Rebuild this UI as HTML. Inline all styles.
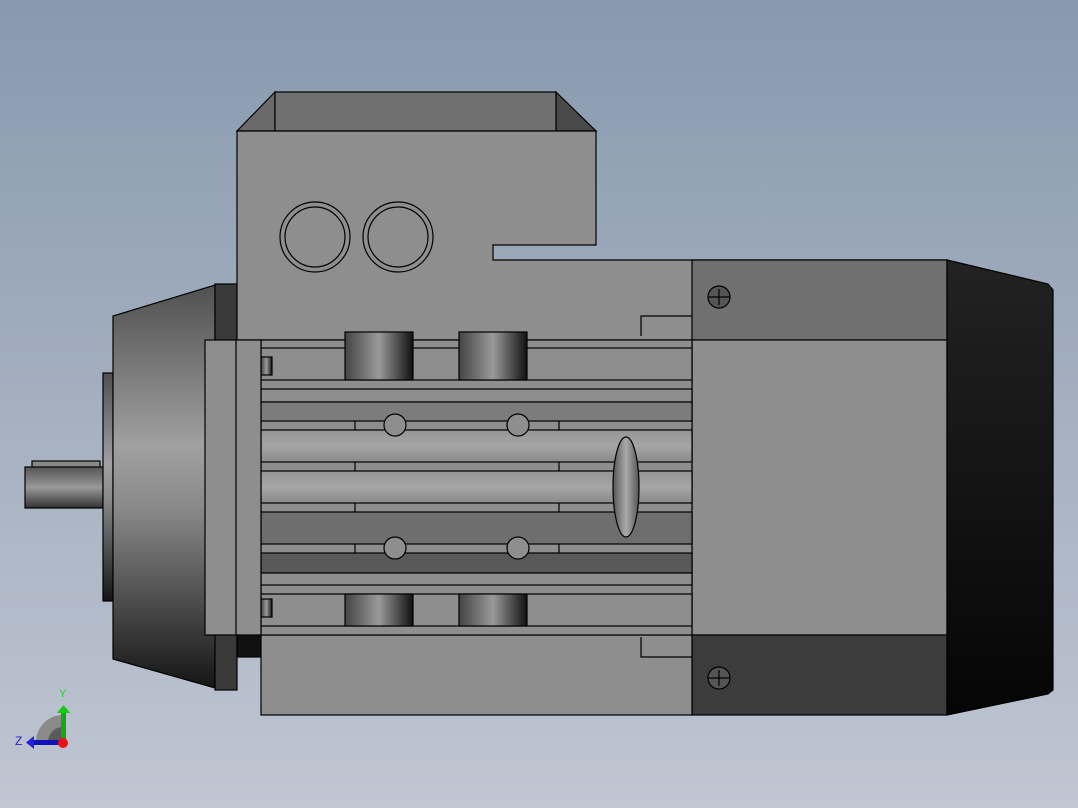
<!DOCTYPE html>
<html><head><style>html,body{margin:0;padding:0;width:1078px;height:808px;overflow:hidden}</style></head>
<body>
<svg width="1078" height="808" viewBox="0 0 1078 808" xmlns="http://www.w3.org/2000/svg" font-family="Liberation Sans, sans-serif">
<defs>
<linearGradient id="bg" x1="0" y1="0" x2="0" y2="1"><stop offset="0" stop-color="#8899ae"/><stop offset="1" stop-color="#c0c6d2"/></linearGradient>
<linearGradient id="cone" x1="0" y1="0" x2="0" y2="1"><stop offset="0" stop-color="#505050"/><stop offset="0.4" stop-color="#a0a0a0"/><stop offset="0.55" stop-color="#8a8a8a"/><stop offset="1" stop-color="#151515"/></linearGradient>
<linearGradient id="shaft" x1="0" y1="0" x2="0" y2="1"><stop offset="0" stop-color="#555"/><stop offset="0.5" stop-color="#999"/><stop offset="1" stop-color="#333"/></linearGradient>
<linearGradient id="boss" x1="0" y1="0" x2="1" y2="0"><stop offset="0" stop-color="#444"/><stop offset="0.5" stop-color="#9a9a9a"/><stop offset="1" stop-color="#111"/></linearGradient>
<linearGradient id="fan" x1="0" y1="0" x2="0" y2="1"><stop offset="0" stop-color="#222"/><stop offset="1" stop-color="#050505"/></linearGradient>
<linearGradient id="finL" x1="0" y1="0" x2="0" y2="1"><stop offset="0" stop-color="#959595"/><stop offset="0.5" stop-color="#a6a6a6"/><stop offset="1" stop-color="#8a8a8a"/></linearGradient>
<linearGradient id="ell" x1="0" y1="0" x2="1" y2="0"><stop offset="0" stop-color="#555"/><stop offset="0.5" stop-color="#aaa"/><stop offset="1" stop-color="#555"/></linearGradient>
</defs>
<rect width="1078" height="808" fill="url(#bg)"/>
<g stroke="#000" stroke-width="1.2">
<!-- shaft -->
<rect x="32" y="461" width="68" height="7" fill="#888"/>
<rect x="25" y="467" width="78" height="41" fill="url(#shaft)"/>
<!-- spigot -->
<rect x="103" y="373" width="10" height="228" fill="url(#cone)"/>
<!-- cone -->
<polygon points="113,316 215,285 215,688 113,659" fill="url(#cone)"/>
<rect x="215" y="284" width="22" height="406" fill="#3a3a3a"/>
<rect x="237" y="635" width="24" height="22" fill="#111"/>
<!-- junction box top -->
<polygon points="237,131 275,92 275,131" fill="#6a6a6a"/>
<polygon points="556,92 596,131 556,131" fill="#4a4a4a"/>
<rect x="275" y="92" width="281" height="39" fill="#707070"/>
<!-- body with box -->
<polygon points="237,131 596,131 596,245 493,245 493,260 947,260 947,340 237,340" fill="#8e8e8e"/>
<rect x="692" y="260" width="255" height="80" fill="#707070"/>
<rect x="692" y="340" width="255" height="295" fill="#8e8e8e"/>
<rect x="692" y="635" width="255" height="80" fill="#3c3c3c"/>
<rect x="261" y="635" width="431" height="80" fill="#8e8e8e"/>
<rect x="261" y="340" width="431" height="295" fill="#8e8e8e"/>
<!-- brackets -->
<path d="M641,336 V316 H692" fill="none"/>
<path d="M641,637 V657 H692" fill="none"/>
<!-- fins -->
<rect x="261" y="348" width="431" height="32" fill="#8e8e8e"/>
<rect x="261" y="389" width="431" height="13" fill="#8e8e8e"/>
<rect x="261" y="402" width="431" height="19" fill="#7c7c7c"/>
<rect x="261" y="430" width="431" height="32" fill="url(#finL)"/>
<rect x="261" y="471" width="431" height="32" fill="url(#finL)"/>
<rect x="261" y="512" width="431" height="32" fill="#6e6e6e"/>
<rect x="261" y="553" width="431" height="20" fill="#595959"/>
<rect x="261" y="573" width="431" height="12" fill="#8e8e8e"/>
<rect x="261" y="594" width="431" height="32" fill="#8e8e8e"/>
<path d="M355,421V430M559,421V430M355,462V471M559,462V471M355,503V512M559,503V512M355,544V553M559,544V553" fill="none"/>
<circle cx="395" cy="425" r="11" fill="#8e8e8e"/>
<circle cx="518" cy="425" r="11" fill="#8e8e8e"/>
<circle cx="395" cy="548" r="11" fill="#8e8e8e"/>
<circle cx="518" cy="548" r="11" fill="#8e8e8e"/>
<ellipse cx="626" cy="487" rx="13" ry="50" fill="url(#ell)"/>
<!-- bosses -->
<rect x="345" y="332" width="68" height="48" fill="url(#boss)"/>
<rect x="459" y="332" width="68" height="48" fill="url(#boss)"/>
<rect x="345" y="594" width="68" height="32" fill="url(#boss)"/>
<rect x="459" y="594" width="68" height="32" fill="url(#boss)"/>
<rect x="261" y="357" width="11" height="18" fill="url(#boss)"/>
<rect x="261" y="599" width="11" height="18" fill="url(#boss)"/>
<!-- flange plate -->
<rect x="205" y="340" width="56" height="295" fill="#8e8e8e"/>
<line x1="236" y1="340" x2="236" y2="635"/>
<!-- glands -->
<circle cx="315" cy="237" r="35" fill="none"/>
<circle cx="315" cy="237" r="30" fill="none"/>
<circle cx="398" cy="237" r="35" fill="none"/>
<circle cx="398" cy="237" r="30" fill="none"/>
<!-- screws -->
<circle cx="719" cy="297" r="11" fill="#555"/>
<path d="M708,297H730M719,289V305" fill="none"/>
<circle cx="719" cy="678" r="11" fill="#555"/>
<path d="M708,678H730M719,670V686" fill="none"/>
<!-- fan cover -->
<polygon points="947,260 1048,284 1053,290 1053,690 1048,694 947,715" fill="url(#fan)"/>
</g>
<!-- triad -->
<path d="M36,742 A27,27 0 0 1 63,715 V742 Z" fill="#8a8a8a"/>
<path d="M48,742 A15,15 0 0 1 63,727 V742 Z" fill="#5a5a5a"/>
<rect x="61" y="712" width="5" height="30" fill="#1a1"/>
<polygon points="57,713 63.5,705 70,713" fill="#1c1"/>
<rect x="33" y="740" width="28" height="5" fill="#11b"/>
<polygon points="34,736 26,742.5 34,749" fill="#22d"/>
<circle cx="63" cy="743" r="5" fill="#e11"/>
<text x="59" y="697" font-size="11" fill="#2c2">Y</text>
<text x="15" y="745" font-size="12" fill="#22c">Z</text>
</svg>
</body></html>
